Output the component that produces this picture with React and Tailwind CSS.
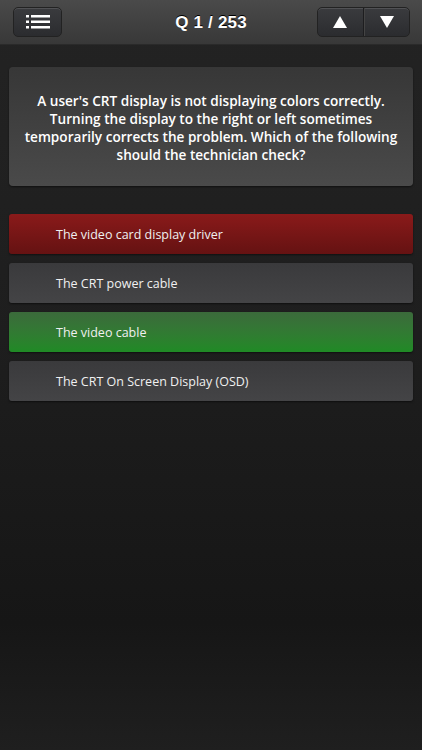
import React from "react";

const answers = [
  { text: "The video card display driver", tone: "red" },
  { text: "The CRT power cable", tone: "gray" },
  { text: "The video cable", tone: "green" },
  { text: "The CRT On Screen Display (OSD)", tone: "gray" },
];

const toneClass = {
  red: "bg-gradient-to-b from-[#8a1a1a] to-[#651212]",
  gray: "bg-gradient-to-b from-[#3a3a3c] to-[#444446]",
  green: "bg-gradient-to-b from-[#3b6a3b] to-[#1f8a25]",
};

const MenuIcon = () => (
  <svg width="24" height="14" viewBox="0 0 24 14" fill="white">
    <rect x="0" y="0" width="3" height="2.5" />
    <rect x="5" y="0" width="19" height="2.5" />
    <rect x="0" y="5.5" width="3" height="2.5" />
    <rect x="5" y="5.5" width="19" height="2.5" />
    <rect x="0" y="11" width="3" height="2.5" />
    <rect x="5" y="11" width="19" height="2.5" />
  </svg>
);

const App = () => {
  return (
    <div className="w-[422px] h-[750px] flex flex-col bg-[linear-gradient(to_bottom,#232323_0%,#1e1e1e_45%,#161616_83%,#1f1f1f_100%)] font-['Open_Sans',sans-serif] overflow-hidden">
      <div className="h-[45px] grid grid-cols-[1fr_auto_1fr] items-center px-[13px] bg-gradient-to-b from-[#4a4a4a] to-[#383838] border-b border-[#2a2a2a]">
        <div className="flex">
          <button className="w-[49px] h-[30px] flex items-center justify-center rounded-[5px] bg-gradient-to-b from-[#3a3b3e] to-[#2b2c2f] border border-[#222] shadow-[inset_0_1px_0_rgba(255,255,255,0.12)]">
            <MenuIcon />
          </button>
        </div>
        <h1 className="text-white text-[17px] font-bold font-['Liberation_Sans',sans-serif] [text-shadow:0_-1px_0_#000] tracking-[0.2px] pt-[1px]">
          Q 1 / 253
        </h1>
        <div className="flex justify-end">
          <div className="flex h-[30px] w-[93px] rounded-[5px] border border-[#222] bg-gradient-to-b from-[#3a3b3e] to-[#2b2c2f] shadow-[inset_0_1px_0_rgba(255,255,255,0.12)] overflow-hidden mr-[-1px]">
            <button className="flex-1 flex items-center justify-center border-r border-[#1d1d1f]">
              <svg width="14" height="12" viewBox="0 0 14 12" fill="white">
                <polygon points="7,0 14,12 0,12" />
              </svg>
            </button>
            <button className="flex-1 flex items-center justify-center border-l border-[#444]">
              <svg width="14" height="12" viewBox="0 0 14 12" fill="white">
                <polygon points="0,0 14,0 7,12" />
              </svg>
            </button>
          </div>
        </div>
      </div>

      <div className="px-[9px] pt-[22px] flex flex-col">
        <div className="h-[119px] rounded-[4px] bg-gradient-to-b from-[#373737] to-[#4a4a4a] flex items-center justify-center px-[6px] shadow-[0_1px_2px_rgba(0,0,0,0.5)]">
          <p className="text-white text-[13.6px] font-semibold leading-[18px] text-center pt-[2px]">
            A user's CRT display is not displaying colors correctly. Turning the display to the right or left sometimes temporarily corrects the problem. Which of the following should the technician check?
          </p>
        </div>

        <div className="mt-[28px] flex flex-col gap-[9px]">
          {answers.map((a) => (
            <div
              key={a.text}
              className={`h-[40px] rounded-[3px] flex items-center pl-[47px] shadow-[0_1px_2px_rgba(0,0,0,0.5)] ${toneClass[a.tone]}`}
            >
              <span className="text-[#f0f0f0] text-[12.5px] pt-[2px]">{a.text}</span>
            </div>
          ))}
        </div>
      </div>
    </div>
  );
};

export default App;
